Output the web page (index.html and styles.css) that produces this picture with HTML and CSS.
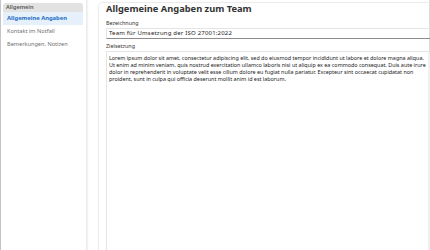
FILE: index.html
```html
<!DOCTYPE html>
<html lang="de">
<head>
    <meta charset="UTF-8">
    <meta name="viewport" content="width=device-width, initial-scale=1.0">
    <title>Team - Allgemeine Angaben</title>
    <link rel="stylesheet" href="styles.css">
</head>
<body>
    <div class="window">
        <nav class="sidebar">
            <div class="nav-group">Allgemein</div>
            <div class="nav-item active">Allgemeine Angaben</div>
            <div class="nav-item">Kontakt im Notfall</div>
            <div class="nav-item">Bemerkungen, Notizen</div>
        </nav>

        <main class="panel">
            <h1>Allgemeine Angaben zum Team</h1>

            <label class="field-label">Bezeichnung</label>
            <div class="input">Team für Umsetzung der ISO 27001:2022</div>

            <label class="field-label">Zielsetzung</label>
            <div class="textarea">
                <div class="textarea-text">Lorem ipsum dolor sit amet, consectetur adipiscing elit, sed do eiusmod tempor incididunt ut labore et dolore magna aliqua.<br>Ut enim ad minim veniam, quis nostrud exercitation ullamco laboris nisi ut aliquip ex ea commodo consequat. Duis aute irure<br>dolor in reprehenderit in voluptate velit esse cillum dolore eu fugiat nulla pariatur. Excepteur sint occaecat cupidatat non<br>proident, sunt in culpa qui officia deserunt mollit anim id est laborum.</div>
                <div class="scrollbar"></div>
            </div>
        </main>
    </div>
</body>
</html>
```

FILE: styles.css
```css
html, body {
    margin: 0;
    height: 100%;
}

body {
    font-family: "Noto Sans", "Open Sans", sans-serif;
    background: #ffffff;
    color: #222;
}

.window {
    display: flex;
    height: 250px;
    border-left: 1px solid #c4c4c4;
    border-right: 1px solid #dcdcdc;
    padding-right: 1px;
    gap: 11px;
}

/* Navigation links */
.sidebar {
    width: 80px;
    flex: none;
    padding: 3px 3px 0 2px;
    border-right: 1px solid #ececec;
    box-shadow: 1px 0 1px #f2f2f2;
}

.nav-group {
    height: 9px;
    line-height: 9px;
    font-size: 5.6px;
    font-weight: 600;
    color: #555;
    padding-left: 3px;
    background: #e2e2e2;
    border-radius: 3px 3px 0 0;
}

.nav-item {
    height: 13px;
    line-height: 13px;
    font-size: 5.6px;
    color: #707070;
    padding-left: 4px;
}

.nav-item.active {
    background: #e6f0fa;
    color: #1f6fc4;
    font-weight: 700;
    font-size: 5.8px;
}

/* Content panel */
.panel {
    flex: 1;
    margin-top: 2px;
    padding: 0 10px 0 7px;
    border: 1px solid #ebebeb;
    border-bottom: none;
    border-radius: 5px 5px 0 0;
    display: flex;
    flex-direction: column;
}

.panel h1 {
    margin: 0 0 1px;
    font-size: 9.3px;
    line-height: 12px;
    font-weight: 700;
    color: #333;
}

.field-label {
    display: block;
    margin-top: 3px;
    font-size: 5.4px;
    line-height: 8px;
    color: #333;
}

.input {
    height: 9px;
    margin-top: 1px;
    padding-left: 2px;
    font-size: 6px;
    letter-spacing: 0.2px;
    line-height: 9px;
    color: #222;
    border: 1px solid #e4e4e4;
    border-bottom: 1px solid #8c8c8c;
    border-radius: 1px;
}

.textarea {
    flex: 1;
    margin-top: 1px;
    display: flex;
    border: 1px solid #e4e4e4;
    border-bottom: none;
    border-radius: 1px 1px 0 0;
}

.textarea-text {
    flex: 1;
    padding: 3px 2px 0 2px;
    font-size: 5.4px;
    line-height: 7px;
    color: #222;
    white-space: nowrap;
}

.scrollbar {
    width: 8px;
    margin-top: 1px;
    background: #f0f0f0;
}
```
